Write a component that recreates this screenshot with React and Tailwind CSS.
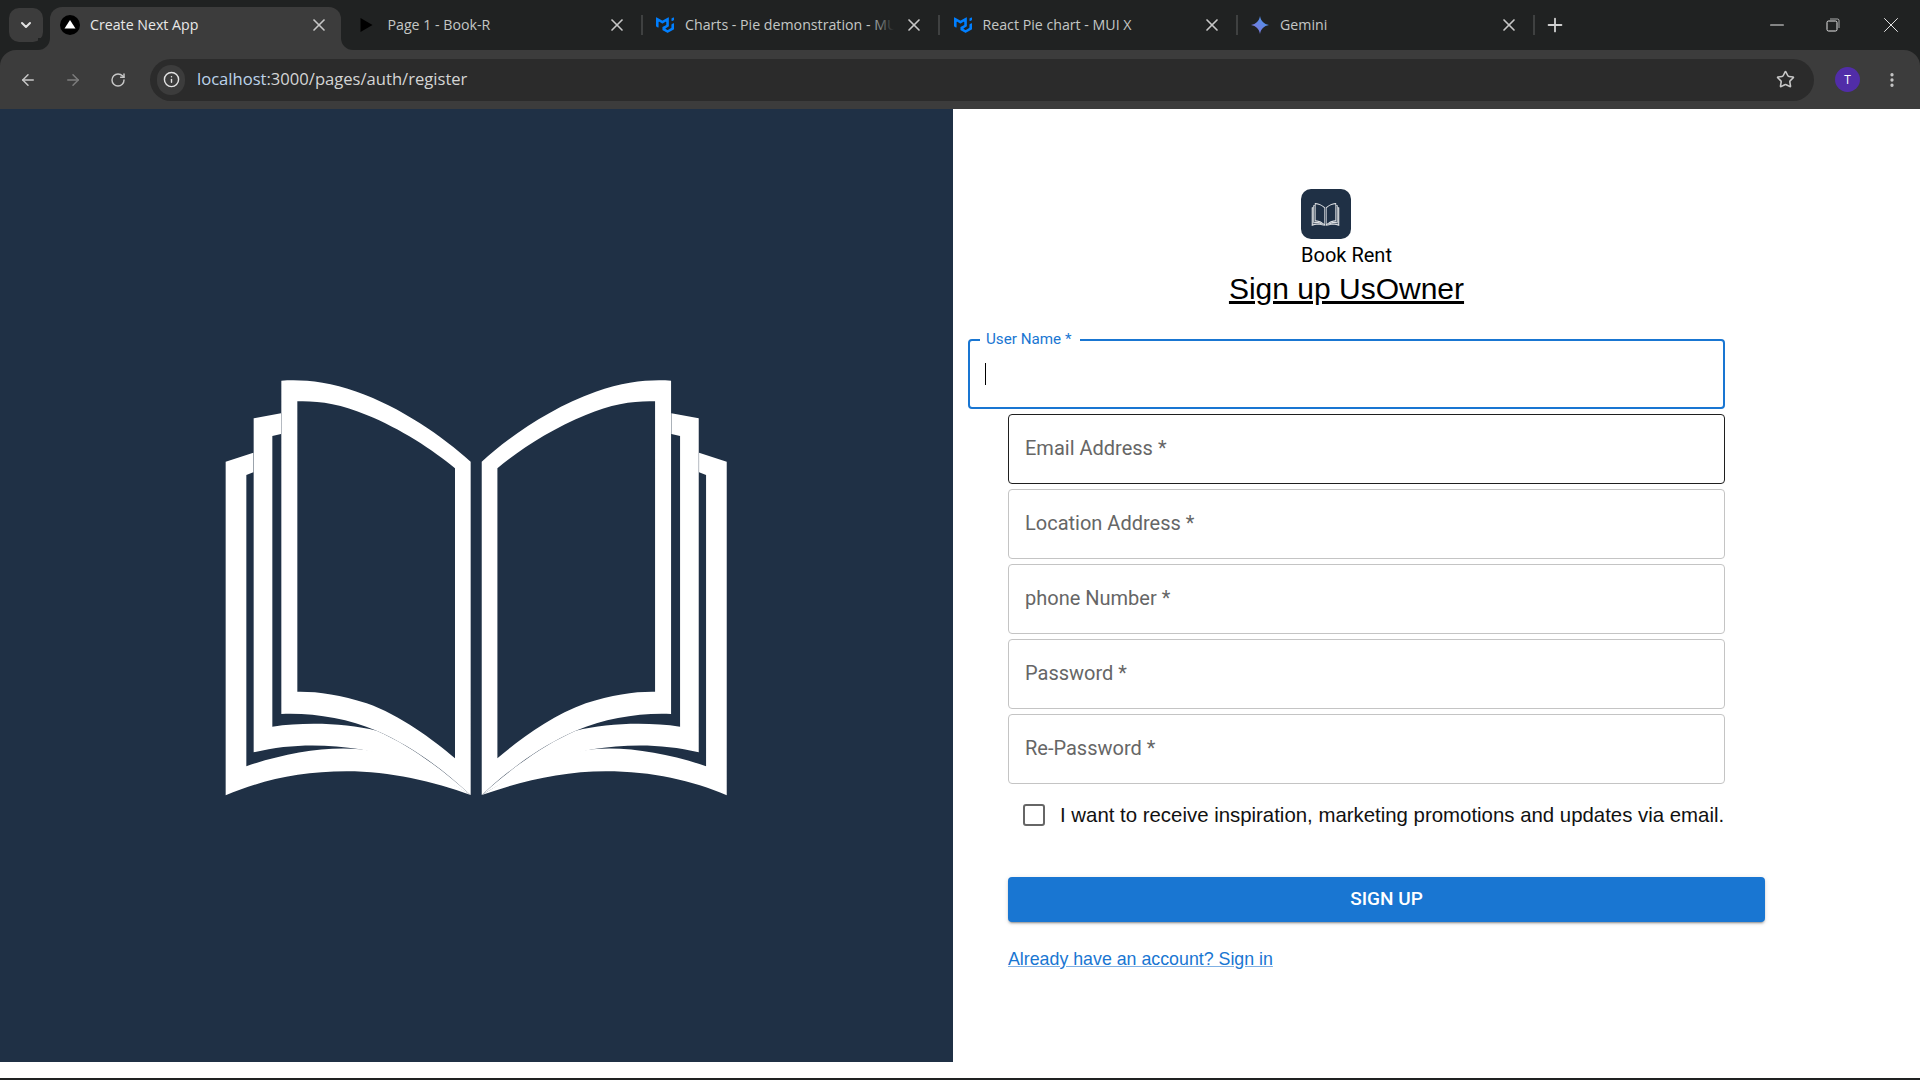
import { ArrowLeft, ArrowRight, RotateCw, Info, Star, EllipsisVertical, X, Plus, ChevronDown, Minus } from 'lucide-react';

const UI_FONT = "font-['Open_Sans',sans-serif]";
const FORM_FONT = "font-['Roboto',sans-serif]";

const BookHalf = () => (
  <g transform="translate(200 360) scale(0.33333)" fill="white" fillRule="evenodd">
    <path d="M77 305 L160 278 L160 337 L139 345 L139 1219 C250 1180 380 1158 480 1168 C620 1185 740 1260 812 1305 C700 1265 570 1234 440 1234 C300 1234 180 1262 77 1306 Z" />
    <path d="M161 175 L243 160 L243 222 L217 228 L217 1100 C320 1085 440 1090 530 1112 C640 1160 740 1240 812 1305 C720 1250 600 1190 480 1168 C380 1152 270 1150 161 1177 Z" />
    <path d="M244 62 C300 58 380 62 470 95 C600 140 730 230 812 305 L812 1305 C730 1230 640 1160 530 1112 C440 1075 340 1058 244 1062 Z M292 124 C350 122 420 130 500 165 C600 205 700 270 765 325 L765 1195 C700 1140 600 1065 500 1030 C420 1003 350 994 292 995 Z" />
  </g>
);

const BookMark = ({ className }) => (
  <svg viewBox="225 378 503 418" className={className}>
    <BookHalf />
    <g transform="translate(952.4 0) scale(-1 1)">
      <BookHalf />
    </g>
  </svg>
);

const NextIcon = () => (
  <svg viewBox="0 0 20 20" className="w-[20px] h-[20px]">
    <circle cx="10" cy="10" r="10" fill="#000" />
    <path d="M10 5 L15.5 13.5 H4.5 Z" fill="#fff" />
  </svg>
);

const PlayIcon = () => (
  <svg viewBox="0 0 20 20" className="w-[20px] h-[20px]">
    <path d="M2.5 3 L14.5 10 L2.5 17 Z" fill="#000" />
  </svg>
);

const MuiIcon = () => (
  <svg viewBox="0 0 36 32" className="w-[18px] h-[16px]" fill="#007fff">
    <path d="M30.343 21.976a1 1 0 00.502-.864l.018-5.787a1 1 0 01.502-.864l3.137-1.802a1 1 0 011.498.867v10.521a1 1 0 01-.502.867l-11.839 6.8a1 1 0 01-.994.001l-9.291-5.314a1 1 0 01-.504-.868v-5.305c0-.006.007-.01.013-.007.005.003.012 0 .012-.007v-.006c0-.004.002-.008.006-.01l7.652-4.396c.007-.004.004-.015-.004-.015a.008.008 0 01-.008-.008l.015-5.201a1 1 0 00-1.5-.87l-5.687 3.277a1 1 0 01-.998 0L6.666 9.7a1 1 0 00-1.499.866v9.4a1 1 0 01-1.496.869l-3.166-1.81a1 1 0 01-.504-.87l.028-16.43A1 1 0 011.527.86l10.845 6.229a1 1 0 00.996 0L24.21.86a1 1 0 011.498.868v16.434a1 1 0 01-.501.867l-5.678 3.27a1 1 0 00.004 1.735l3.132 1.783a1 1 0 00.993-.002l6.685-3.839zM31 7.234a1 1 0 001.514.857l3-1.8A1 1 0 0036 5.434V1.766A1 1 0 0034.486.91l-3 1.8a1 1 0 00-.486.857v3.668z" />
  </svg>
);

const GeminiIcon = () => (
  <svg viewBox="0 0 20 20" className="w-[20px] h-[20px]">
    <defs>
      <linearGradient id="gem" x1="0" y1="1" x2="1" y2="0">
        <stop offset="0" stopColor="#8b6fd6" />
        <stop offset="1" stopColor="#3f9bf0" />
      </linearGradient>
    </defs>
    <path d="M10 1 C10.8 6 14 9.2 19 10 C14 10.8 10.8 14 10 19 C9.2 14 6 10.8 1 10 C6 9.2 9.2 6 10 1 Z" fill="url(#gem)" />
  </svg>
);

const Tab = ({ icon, title, active, fade }) => (
  <div className={`relative flex items-center shrink-0 w-[290.5px] h-[43px] pl-[10px] pb-[7px] rounded-t-[12px] ${active ? 'bg-[#3c3c3c]' : ''}`}>
    <span className="w-[20px] h-[20px] flex items-center justify-center shrink-0">{icon}</span>
    <span className={`relative ml-[10px] w-[209px] overflow-hidden whitespace-nowrap text-[14.2px] ${active ? 'text-[#e8e8e8]' : 'text-[#c4c7c5]'}`}>
      {title}
      {fade && <span className="absolute inset-y-0 right-0 w-[24px] bg-gradient-to-r from-transparent to-[#202222]" />}
    </span>
    <X size={20} strokeWidth={2} className="text-[#c7c7c7] ml-[10px]" />
    {active && (
      <>
        <span className="absolute bottom-0 -left-[12px] w-[12px] h-[12px] bg-[#3c3c3c]">
          <span className="block w-full h-full bg-[#202222] rounded-br-[12px]" />
        </span>
        <span className="absolute bottom-0 -right-[12px] w-[12px] h-[12px] bg-[#3c3c3c]">
          <span className="block w-full h-full bg-[#202222] rounded-bl-[12px]" />
        </span>
      </>
    )}
  </div>
);

const Sep = ({ show }) => (
  <div className="w-[7px] h-[43px] pb-[7px] flex items-center justify-center shrink-0">
    {show && <div className="w-[2px] h-[20px] bg-[#3f4141]" />}
  </div>
);

const TabStrip = () => (
  <div className="flex items-end h-[50px] bg-[#202222] pl-[9px] shrink-0">
    <div className="w-[34px] h-[34px] mb-[8px] mr-[7px] rounded-[10px] bg-[#3c3c3c] flex items-center justify-center shrink-0">
      <ChevronDown size={16} strokeWidth={3} className="text-[#e3e3e3]" />
    </div>
    <Tab active icon={<NextIcon />} title="Create Next App" />
    <Sep />
    <Tab icon={<PlayIcon />} title="Page 1 - Book-R" />
    <Sep show />
    <Tab fade icon={<MuiIcon />} title="Charts - Pie demonstration - MUI" />
    <Sep show />
    <Tab icon={<MuiIcon />} title="React Pie chart - MUI X" />
    <Sep show />
    <Tab icon={<GeminiIcon />} title="Gemini" />
    <Sep show />
    <div className="h-[43px] pb-[7px] flex items-center ml-[6px]">
      <Plus size={22} strokeWidth={2} className="text-[#d0d0d0]" />
    </div>
    <div className="ml-auto h-[50px] flex items-center text-[#e8e8e8]">
      <Minus size={22} strokeWidth={1.1} className="mr-[38px]" />
      <svg viewBox="0 0 14 14" className="w-[14px] h-[14px] mr-[38px]" fill="none" stroke="currentColor" strokeWidth="1">
        <rect x="1" y="3" width="10" height="10" rx="1.5" />
        <path d="M4 1 H11.5 A1.5 1.5 0 0 1 13 2.5 V10" opacity="0.7" />
      </svg>
      <X size={26} strokeWidth={0.9} className="mr-[16px]" />
    </div>
  </div>
);

const Toolbar = () => (
  <div className="flex items-center h-[59px] bg-[#3c3c3c] rounded-t-[16px] shrink-0 pl-[19px]">
    <ArrowLeft size={18} strokeWidth={2} className="text-[#c7c7c7]" />
    <ArrowRight size={18} strokeWidth={2} className="text-[#7d7d7d] ml-[27px]" />
    <RotateCw size={16} strokeWidth={2.2} className="text-[#c7c7c7] ml-[28px]" />
    <div className="flex items-center w-[1664px] h-[42px] ml-[24px] rounded-full bg-[#2b2b2b] pl-[7px]">
      <div className="w-[28px] h-[30px] rounded-full bg-[#3c3c3c] flex items-center justify-center">
        <Info size={17} strokeWidth={2} className="text-[#e3e3e3]" />
      </div>
      <span className="ml-[12px] text-[16.6px] text-[#bcd3ea]">localhost<span className="text-[#d5d5d5]">:3000/pages/auth/register</span></span>
      <Star size={19} strokeWidth={2} className="text-[#c7c7c7] ml-auto mr-[19px]" />
    </div>
    <div className="w-[25px] h-[25px] ml-[21px] rounded-full bg-[#512da8] text-white text-[12px] flex items-center justify-center">T</div>
    <EllipsisVertical size={18} strokeWidth={2.4} className="text-[#c7c7c7] ml-[23px]" />
  </div>
);

const Field = ({ label }) => (
  <div className="flex items-center ml-[40px] w-[717px] h-[70px] pl-[16px] pb-[3px] rounded-[4px] border border-[#c4c4c4] text-[20px] text-[#666666]">
    {label}
  </div>
);

const App = () => (
  <div className={`flex flex-col w-[1920px] h-[1080px] overflow-hidden bg-white ${UI_FONT}`}>
    <TabStrip />
    <div className="bg-[#202222]">
      <Toolbar />
    </div>

    <div className="flex h-[953px] shrink-0">
      <div className="flex items-center justify-center w-[953px] pt-[3px] bg-[#1f3045] shrink-0">
        <BookMark className="w-[503px] h-[418px]" />
      </div>

      <div className={`flex flex-col pl-[15px] ${FORM_FONT}`}>
        <div className="flex flex-col items-center w-[757px] pt-[80px]">
          <div className="flex items-center justify-center w-[50px] h-[50px] mr-[42px] rounded-[10px] bg-[#1f3045]">
            <BookMark className="w-[29px] h-[23px] opacity-85" />
          </div>
          <div className="mt-[4px] h-[24px] leading-[24px] text-[20px] text-black">Book Rent</div>
          <h1 className="mt-[3px] h-[38px] leading-[38px] text-[30px] text-black underline font-['Liberation_Sans',sans-serif]">Sign up UsOwner</h1>
        </div>

        <div className="relative mt-[31px] flex items-center w-[757px] h-[70px] rounded-[4px] border-2 border-[#1976d2]">
          <span className="absolute -top-[11px] left-[10px] pl-[6px] pr-[9px] bg-white text-[15.2px] leading-[18px] text-[#1976d2]">User Name *</span>
          <span className="ml-[15px] w-px h-[22px] bg-black" />
        </div>

        <div className="flex flex-col gap-[5px] mt-[5px]">
          <div className="flex items-center ml-[40px] w-[717px] h-[70px] pl-[16px] pb-[3px] rounded-[4px] border border-[#1f1f1f] text-[20px] text-[#666666]">Email Address *</div>
          <Field label="Location Address *" />
          <Field label="phone Number *" />
          <Field label="Password *" />
          <Field label="Re-Password *" />
        </div>

        <div className="flex items-center ml-[55px] mt-[20px] h-[22px]">
          <div className="w-[22px] h-[22px] rounded-[3px] border-2 border-[#666666] shrink-0" />
          <span className="ml-[15px] whitespace-nowrap text-[20.4px] text-[#111111] font-['Liberation_Sans',sans-serif]">I want to receive inspiration, marketing promotions and updates via email.</span>
        </div>

        <button className="ml-[40px] mt-[51px] w-[757px] h-[45px] rounded-[4px] bg-[#1976d2] text-white text-[19px] font-medium shadow-[0_3px_1px_-2px_rgba(0,0,0,0.2),0_2px_2px_0_rgba(0,0,0,0.14),0_1px_5px_0_rgba(0,0,0,0.12)]">
          SIGN UP
        </button>

        <a className="ml-[40px] mt-[25px] h-[24px] leading-[24px] text-[17.8px] text-[#1976d2] underline decoration-[#7fb0e4] font-['Liberation_Sans',sans-serif]">Already have an account? Sign in</a>
      </div>
    </div>

    <div className="h-[16px] shrink-0" />
    <div className="h-[2px] bg-[#202222] shrink-0" />
  </div>
);

export default App;
